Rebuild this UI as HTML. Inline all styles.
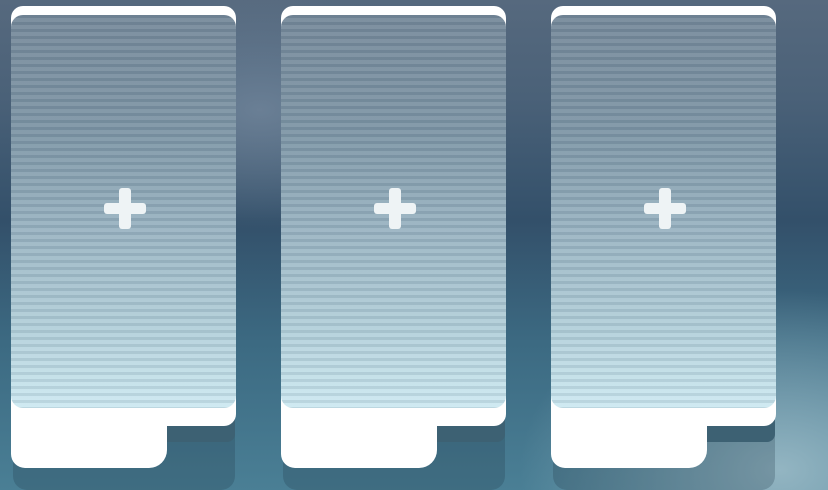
<!DOCTYPE html><html><head><style>
body{margin:0;width:828px;height:490px;overflow:hidden;position:relative;
background:radial-gradient(ellipse 260px 180px at 780px 470px,#93b5c2 0%,rgba(147,181,194,0) 100%),
radial-gradient(ellipse 200px 120px at 260px 110px,#6a7f95 0%,rgba(106,127,149,0) 100%),
linear-gradient(180deg,#56697e 0%,#4a6178 20%,#33506a 45%,#3c6a82 70%,#4a7f95 100%);}
.c{position:absolute;top:6px;width:225px;height:462px}
.sh{position:absolute;left:2px;top:412px;width:222px;height:72px;border-radius:0 0 14px 14px;background:rgba(30,55,70,.25)}
.sh2{position:absolute;left:150px;top:414px;width:74px;height:22px;background:#3d6173;border-radius:0 0 8px 0}
.top{position:absolute;left:0;top:0;width:225px;height:420px;background:#fff;border-radius:12px}
.tab2{position:absolute;left:0;top:400px;width:156px;height:62px;background:#fff;border-radius:0 0 18px 14px}
.g{position:absolute;left:0;top:9px;width:225px;height:393px;border-radius:12px;overflow:hidden;
background:repeating-linear-gradient(180deg,rgba(40,60,80,.10) 0 3px,rgba(255,255,255,.06) 3px 7px),
linear-gradient(180deg,#76899a 0%,#7e96a6 30%,#9ab4c2 55%,#b3d0da 80%,#cde9f1 100%)}
.p1{position:absolute;left:93px;top:197px;width:42px;height:11px;background:#eef3f5;border-radius:3px}
.p2{position:absolute;left:108px;top:182px;width:12px;height:41px;background:#eef3f5;border-radius:3px}
</style></head><body>
<div class="c" style="left:11px"><div class="sh"></div><div class="sh2"></div><div class="top"></div><div class="tab2"></div><div class="g"></div><div class="p1"></div><div class="p2"></div></div>
<div class="c" style="left:281px"><div class="sh"></div><div class="sh2"></div><div class="top"></div><div class="tab2"></div><div class="g"></div><div class="p1"></div><div class="p2"></div></div>
<div class="c" style="left:551px"><div class="sh"></div><div class="sh2"></div><div class="top"></div><div class="tab2"></div><div class="g"></div><div class="p1"></div><div class="p2"></div></div>
</body></html>
